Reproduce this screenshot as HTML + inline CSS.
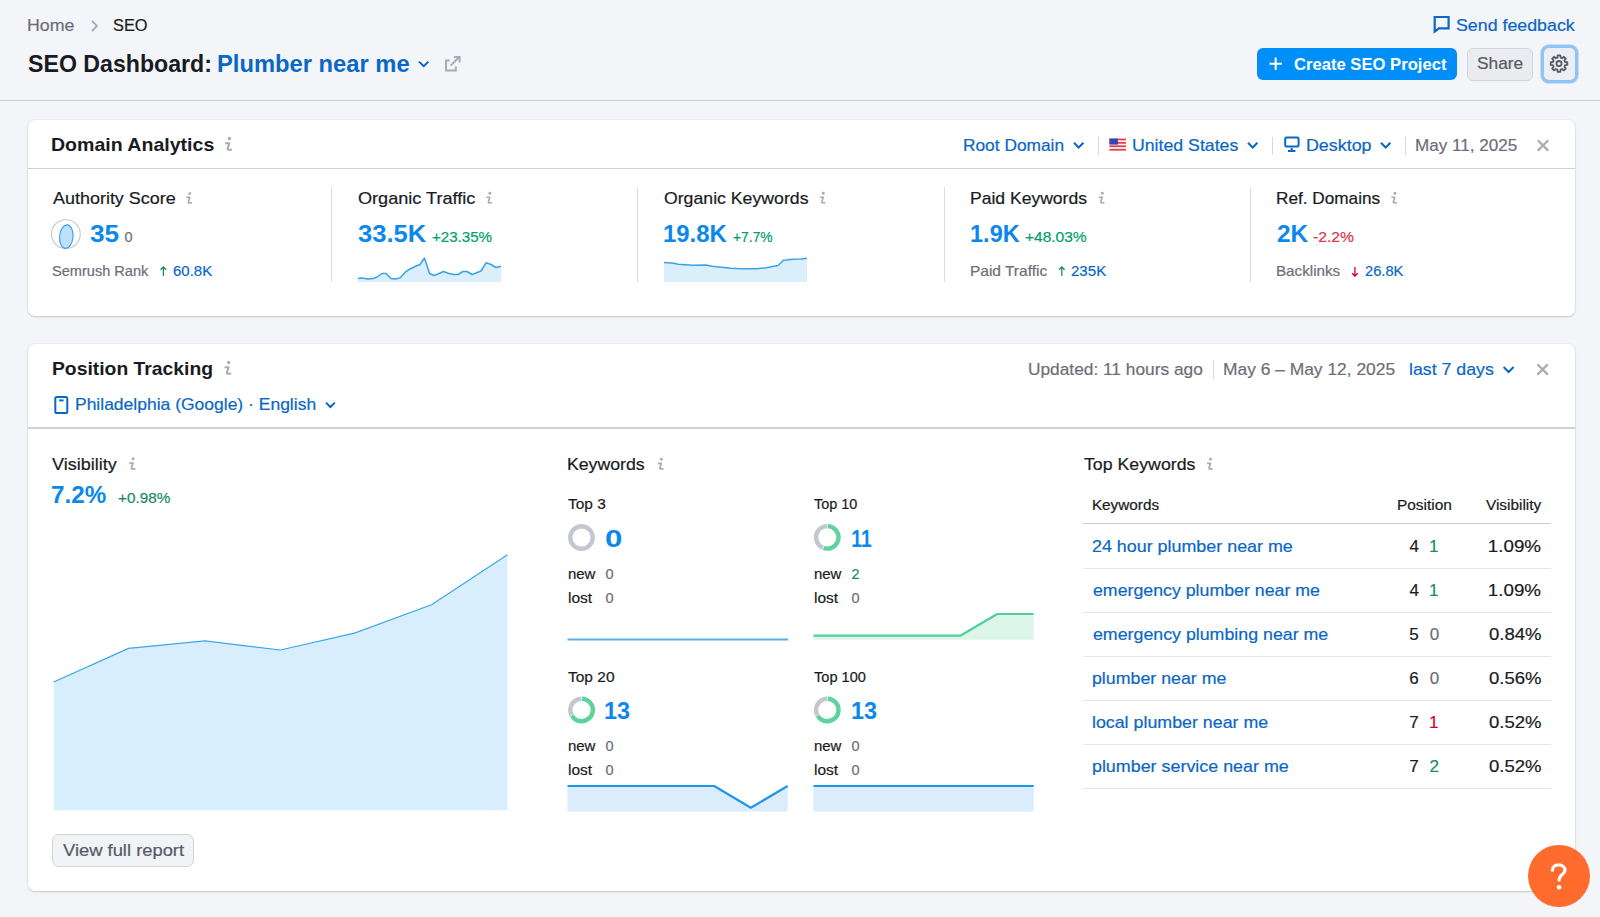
<!DOCTYPE html>
<html><head><meta charset="utf-8">
<style>
html,body{margin:0;padding:0;}
body{width:1600px;height:917px;overflow:hidden;background:#f4f5f9;position:relative;font-family:"Liberation Sans",sans-serif;color:#191b23;}
.t{position:absolute;line-height:1;white-space:nowrap;-webkit-text-stroke:0.2px currentColor;}
.abs{position:absolute;}
.hdr-line{position:absolute;left:0;top:100px;width:1600px;height:1px;background:#c9cbd3;}
.card{position:absolute;left:28px;width:1547px;background:#fff;border-radius:7px;box-shadow:0 1px 2px rgba(25,27,35,0.18),0 0 0 1px rgba(25,27,35,0.035);}
.divh{position:absolute;height:1px;background:#dcdde3;}
.divv{position:absolute;width:1px;background:#dcdde3;}
.btn-blue{position:absolute;left:1257px;top:48px;width:200px;height:32px;background:#008ff8;border-radius:6px;}
.btn-share{position:absolute;left:1467px;top:48px;width:64px;height:31px;background:#ebecf0;border:1px solid #d3d5dc;border-radius:6px;}
.btn-gear{position:absolute;left:1541px;top:45px;width:31px;height:32px;background:#eceef3;border:3px solid #8fc5f4;border-radius:8px;box-shadow:0 0 0 0.8px rgba(143,197,244,0.6);}
.btn-view{position:absolute;left:52px;top:834px;width:140px;height:31px;background:#f2f3f6;border:1px solid #d1d3da;border-radius:7px;}
.help{position:absolute;left:1527.5px;top:845px;width:62px;height:62px;border-radius:50%;background:#ff6b2d;}
svg.ov{position:absolute;left:0;top:0;width:1600px;height:917px;}
</style></head><body>
<div class="hdr-line"></div>
<div class="btn-blue"></div>
<div class="btn-share"></div>
<div class="btn-gear"></div>

<div class="card" style="top:120px;height:196px;"></div>
<div class="divh" style="left:28px;top:168px;width:1547px;background:#cfd1d7;"></div>
<div class="divv" style="left:331px;top:187px;height:95px;"></div>
<div class="divv" style="left:637px;top:187px;height:95px;"></div>
<div class="divv" style="left:944px;top:187px;height:95px;"></div>
<div class="divv" style="left:1250px;top:187px;height:95px;"></div>

<div class="card" style="top:344px;height:547px;"></div>
<div class="divh" style="left:28px;top:427px;width:1547px;height:2px;background:#d0d2d8;"></div>
<div class="divh" style="left:1083px;top:523px;width:468px;background:#c8cad1;"></div>
<div class="divh" style="left:1083px;top:568px;width:468px;background:#e6e7ec;"></div>
<div class="divh" style="left:1083px;top:612px;width:468px;background:#e6e7ec;"></div>
<div class="divh" style="left:1083px;top:656px;width:468px;background:#e6e7ec;"></div>
<div class="divh" style="left:1083px;top:700px;width:468px;background:#e6e7ec;"></div>
<div class="divh" style="left:1083px;top:744px;width:468px;background:#e6e7ec;"></div>
<div class="divh" style="left:1083px;top:788px;width:468px;background:#e6e7ec;"></div>

<div class="btn-view"></div>

<svg class="ov" viewBox="0 0 1600 917">
<path d="M358,278.5 L362,278 L368,279 L373,278.5 L377,277 L382,273.5 L386,273.5 L391,278.5 L395,279 L400,278 L406,271.5 L410,269 L415,266.5 L420,264.5 L424.5,258 L429.5,273.5 L434,275.5 L439,273.5 L443.5,271.5 L449,273.5 L454,274.5 L458,274.5 L463,271.5 L467,271.5 L472,274.5 L476,273 L481,271 L486,262.8 L491,264.5 L496,267.5 L501,266.2 L501,282 L358,282 Z" fill="#dbeefc"/><path d="M358,278.5 L362,278 L368,279 L373,278.5 L377,277 L382,273.5 L386,273.5 L391,278.5 L395,279 L400,278 L406,271.5 L410,269 L415,266.5 L420,264.5 L424.5,258 L429.5,273.5 L434,275.5 L439,273.5 L443.5,271.5 L449,273.5 L454,274.5 L458,274.5 L463,271.5 L467,271.5 L472,274.5 L476,273 L481,271 L486,262.8 L491,264.5 L496,267.5 L501,266.2" fill="none" stroke="#3aa3e8" stroke-width="1.5" stroke-linejoin="round"/>
<path d="M664,262.5 L674,263.3 L678,264.2 L693,265.2 L706,265 L712,266.2 L731,268.2 L741,268.8 L756,268.8 L766,267.8 L778,265.5 L783.5,260.3 L787,260 L792,259.3 L801,259 L807,258.2 L807,282 L664,282 Z" fill="#dbeefc"/><path d="M664,262.5 L674,263.3 L678,264.2 L693,265.2 L706,265 L712,266.2 L731,268.2 L741,268.8 L756,268.8 L766,267.8 L778,265.5 L783.5,260.3 L787,260 L792,259.3 L801,259 L807,258.2" fill="none" stroke="#3aa3e8" stroke-width="1.5" stroke-linejoin="round"/>
<path d="M53.7,682 L128.5,648.4 L204.9,640.8 L280.3,650 L354.5,633.1 L431.5,604.7 L507.5,554.7 L507.5,810.2 L53.7,810.2 Z" fill="#d9eefc"/><path d="M53.7,682 L128.5,648.4 L204.9,640.8 L280.3,650 L354.5,633.1 L431.5,604.7 L507.5,554.7" fill="none" stroke="#3aa8e6" stroke-width="1.2" stroke-linejoin="round"/>
<path d="M567.5,639.6 L788,639.6" stroke="#5aaee6" stroke-width="2" fill="none"/>
<path d="M813.5,635.7 L960.2,635.7 L997.2,614 L1033.7,614 L1033.7,639.7 L813.5,639.7 Z" fill="#dcf6ea"/><path d="M813.5,635.7 L960.2,635.7 L997.2,614 L1033.7,614" fill="none" stroke="#52cf9c" stroke-width="2.2" stroke-linejoin="round"/>
<path d="M567.5,786 L714.2,786 L750.8,807.7 L787.7,786 L787.7,811.4 L567.5,811.4 Z" fill="#dbedfc"/><path d="M567.5,786 L714.2,786 L750.8,807.7 L787.7,786" fill="none" stroke="#1f96ea" stroke-width="2.2" stroke-linejoin="round"/>
<path d="M813.5,786 L1033.7,786 L1033.7,811.4 L813.5,811.4 Z" fill="#dbedfc"/><path d="M813.5,786 L1033.7,786" fill="none" stroke="#1f96ea" stroke-width="2.2" stroke-linejoin="round"/>
<!-- breadcrumb chevron -->
<path d="M92,21 L97,26 L92,31" fill="none" stroke="#a9abb6" stroke-width="1.8"/>
<!-- title chevron -->
<path d="M419,61.6 L423.7,66.2 L428.4,61.6" fill="none" stroke="#0b67c4" stroke-width="2"/>
<!-- external link -->
<g fill="none" stroke="#a9abb6" stroke-width="2">
<path d="M449.7,60.6 H446 V70.4 H455.8 V66.6"/>
<path d="M450.6,65.6 L459,57.2"/>
<path d="M454,57 H459.6 V62.4"/>
</g>
<!-- feedback icon -->
<path d="M1434.7,17 H1448.6 V28.3 H1439 L1434.7,31.6 Z" fill="none" stroke="#0b67c4" stroke-width="2.2" stroke-linejoin="miter"/>
<!-- plus -->
<path d="M1275.7,57.6 V70 M1269.5,63.8 H1281.9" stroke="#fff" stroke-width="2"/>
<!-- gear -->
<g transform="translate(1559,63.6)" fill="none" stroke="#575a66" stroke-width="1.8" stroke-linejoin="round">
<path id="gearp" d="M-1.59,-5.99 L-1.34,-8.29 L1.34,-8.29 L1.59,-5.99 A6.20,6.20 0 0 1 3.11,-5.36 L4.92,-6.81 L6.81,-4.92 L5.36,-3.11 A6.20,6.20 0 0 1 5.99,-1.59 L8.29,-1.34 L8.29,1.34 L5.99,1.59 A6.20,6.20 0 0 1 5.36,3.11 L6.81,4.92 L4.92,6.81 L3.11,5.36 A6.20,6.20 0 0 1 1.59,5.99 L1.34,8.29 L-1.34,8.29 L-1.59,5.99 A6.20,6.20 0 0 1 -3.11,5.36 L-4.92,6.81 L-6.81,4.92 L-5.36,3.11 A6.20,6.20 0 0 1 -5.99,1.59 L-8.29,1.34 L-8.29,-1.34 L-5.99,-1.59 A6.20,6.20 0 0 1 -5.36,-3.11 L-6.81,-4.92 L-4.92,-6.81 L-3.11,-5.36 A6.20,6.20 0 0 1 -1.59,-5.99 Z"/>
<circle r="2.6"/>
</g>
<!-- domain chevrons -->
<g fill="none" stroke="#0b67c4" stroke-width="2">
<path d="M1074,142.8 L1078.7,147.5 L1083.4,142.8"/>
<path d="M1248,142.8 L1252.7,147.5 L1257.4,142.8"/>
<path d="M1381,142.8 L1385.7,147.5 L1390.4,142.8"/>
<path d="M326,402.6 L330.4,407 L334.8,402.6"/>
<path d="M1503.6,367 L1508.6,372 L1513.6,367"/>
</g>
<!-- separators -->
<g stroke="#d6d8de" stroke-width="1">
<path d="M1098.5,137 V155"/><path d="M1272.5,137 V155"/><path d="M1405.5,137 V155"/><path d="M1213.5,361 V379"/>
</g>
<!-- flag -->
<g>
<rect x="1109.4" y="138.6" width="16.6" height="12" fill="#f5f5f5"/>
<rect x="1109.4" y="138.6" width="16.6" height="1.7" fill="#e8384a"/>
<rect x="1109.4" y="142" width="16.6" height="1.7" fill="#e8384a"/>
<rect x="1109.4" y="145.4" width="16.6" height="1.7" fill="#e8384a"/>
<rect x="1109.4" y="148.9" width="16.6" height="1.7" fill="#e8384a"/>
<rect x="1109.4" y="138.6" width="8.5" height="6" fill="#3b44a8"/>
</g>
<!-- desktop -->
<g fill="none" stroke="#0b67c4" stroke-width="2">
<rect x="1285.2" y="137.5" width="13.4" height="9" rx="1.2"/>
<path d="M1288,151 H1295.4 M1291.7,148 V151"/>
</g>
<!-- close X -->
<g stroke="#a9abb6" stroke-width="2.3">
<path d="M1537.8,140.2 L1548.2,150.6 M1548.2,140.2 L1537.8,150.6"/>
<path d="M1537.4,364.2 L1547.8,374.6 M1547.8,364.2 L1537.4,374.6"/>
</g>
<!-- phone -->
<g fill="none" stroke="#0b67c4" stroke-width="2">
<rect x="55.3" y="397" width="12" height="16.1" rx="1.6"/>
<path d="M59.2,400.4 H63.6"/>
</g>
<!-- authority score circle -->
<circle cx="65.9" cy="234.1" r="14.4" fill="#fff" stroke="#c4c7cf" stroke-width="1.1"/>
<ellipse cx="66.3" cy="236.6" rx="6.7" ry="11.8" fill="#bfe0fb" stroke="#3a9de4" stroke-width="1.1" transform="rotate(5 66.3 236.6)"/>
<!-- arrows -->
<g fill="none" stroke-width="1.3">
<path d="M163.4,267 V276 M160.6,269.8 L163.4,267 L166.2,269.8" stroke="#1d8a64"/>
<path d="M1061.8,267 V276 M1059,269.8 L1061.8,267 L1064.6,269.8" stroke="#1d8a64"/>
<path d="M1354.9,267 V276 M1352.1,273.2 L1354.9,276 L1357.7,273.2" stroke="#d1002f"/>
</g>
<circle cx="581.5" cy="537.5" r="11.25" fill="none" stroke="#c4c7cf" stroke-width="4.4"/>
<circle cx="827.3" cy="537.4" r="11.25" fill="none" stroke="#c4c7cf" stroke-width="4.4" stroke-dasharray="30.63 70.69" transform="rotate(112.0 827.3 537.4)"/>
<circle cx="827.3" cy="537.4" r="11.25" fill="none" stroke="#5ed39f" stroke-width="4.4" stroke-dasharray="38.48 70.69" transform="rotate(-88.0 827.3 537.4)"/>
<circle cx="581.6" cy="710" r="11.25" fill="none" stroke="#c4c7cf" stroke-width="4.4" stroke-dasharray="22.78 70.69" transform="rotate(152.0 581.6 710)"/>
<circle cx="581.6" cy="710" r="11.25" fill="none" stroke="#5ed39f" stroke-width="4.4" stroke-dasharray="46.34 70.69" transform="rotate(-88.0 581.6 710)"/>
<circle cx="827.3" cy="710" r="11.25" fill="none" stroke="#c4c7cf" stroke-width="4.4" stroke-dasharray="22.78 70.69" transform="rotate(152.0 827.3 710)"/>
<circle cx="827.3" cy="710" r="11.25" fill="none" stroke="#5ed39f" stroke-width="4.4" stroke-dasharray="46.34 70.69" transform="rotate(-88.0 827.3 710)"/>
<g transform="translate(224.3,137) scale(1.015)" fill="none" stroke="#a9abb6" stroke-width="2" stroke-linejoin="round"><circle cx="5.0" cy="1.5" r="1.65" fill="#a9abb6" stroke="none"/><path d="M0.9,6.1 H4.9 L3.3,11.3 Q3.0,12.5 4.2,12.5 H7.5"/></g>
<g transform="translate(185.6,192.3) scale(0.847)" fill="none" stroke="#a9abb6" stroke-width="2" stroke-linejoin="round"><circle cx="5.0" cy="1.5" r="1.65" fill="#a9abb6" stroke="none"/><path d="M0.9,6.1 H4.9 L3.3,11.3 Q3.0,12.5 4.2,12.5 H7.5"/></g>
<g transform="translate(485.6,192) scale(0.861)" fill="none" stroke="#a9abb6" stroke-width="2" stroke-linejoin="round"><circle cx="5.0" cy="1.5" r="1.65" fill="#a9abb6" stroke="none"/><path d="M0.9,6.1 H4.9 L3.3,11.3 Q3.0,12.5 4.2,12.5 H7.5"/></g>
<g transform="translate(819,192) scale(0.861)" fill="none" stroke="#a9abb6" stroke-width="2" stroke-linejoin="round"><circle cx="5.0" cy="1.5" r="1.65" fill="#a9abb6" stroke="none"/><path d="M0.9,6.1 H4.9 L3.3,11.3 Q3.0,12.5 4.2,12.5 H7.5"/></g>
<g transform="translate(1098,192) scale(0.861)" fill="none" stroke="#a9abb6" stroke-width="2" stroke-linejoin="round"><circle cx="5.0" cy="1.5" r="1.65" fill="#a9abb6" stroke="none"/><path d="M0.9,6.1 H4.9 L3.3,11.3 Q3.0,12.5 4.2,12.5 H7.5"/></g>
<g transform="translate(1390.6,192) scale(0.861)" fill="none" stroke="#a9abb6" stroke-width="2" stroke-linejoin="round"><circle cx="5.0" cy="1.5" r="1.65" fill="#a9abb6" stroke="none"/><path d="M0.9,6.1 H4.9 L3.3,11.3 Q3.0,12.5 4.2,12.5 H7.5"/></g>
<g transform="translate(223.6,361) scale(1.015)" fill="none" stroke="#a9abb6" stroke-width="2" stroke-linejoin="round"><circle cx="5.0" cy="1.5" r="1.65" fill="#a9abb6" stroke="none"/><path d="M0.9,6.1 H4.9 L3.3,11.3 Q3.0,12.5 4.2,12.5 H7.5"/></g>
<g transform="translate(128.5,457.5) scale(0.912)" fill="none" stroke="#a9abb6" stroke-width="2" stroke-linejoin="round"><circle cx="5.0" cy="1.5" r="1.65" fill="#a9abb6" stroke="none"/><path d="M0.9,6.1 H4.9 L3.3,11.3 Q3.0,12.5 4.2,12.5 H7.5"/></g>
<g transform="translate(657,458) scale(0.876)" fill="none" stroke="#a9abb6" stroke-width="2" stroke-linejoin="round"><circle cx="5.0" cy="1.5" r="1.65" fill="#a9abb6" stroke="none"/><path d="M0.9,6.1 H4.9 L3.3,11.3 Q3.0,12.5 4.2,12.5 H7.5"/></g>
<g transform="translate(1206.2,458) scale(0.876)" fill="none" stroke="#a9abb6" stroke-width="2" stroke-linejoin="round"><circle cx="5.0" cy="1.5" r="1.65" fill="#a9abb6" stroke="none"/><path d="M0.9,6.1 H4.9 L3.3,11.3 Q3.0,12.5 4.2,12.5 H7.5"/></g>
<!-- help -->
</svg>
<div class="help"></div>
<svg class="ov" viewBox="0 0 1600 917" style="pointer-events:none">
<path d="M1552.4,870.2 C1552.4,866.6 1555.2,864.9 1558.6,864.9 C1562.2,864.9 1565,867.2 1565,870.4 C1565,874.2 1559.1,875 1559.1,879.4 V880" fill="none" stroke="#fff" stroke-width="3.3" stroke-linecap="round"/>
<circle cx="1559.1" cy="887.2" r="2.3" fill="#fff"/>
</svg>
<span class="t" style="left:27.34px;top:16.61px;font-size:17px;color:#6c6e79;transform:scaleX(1.0445);transform-origin:1.36px 0;">Home</span>
<span class="t" style="left:112.83px;top:16.61px;font-size:17px;transform:scaleX(0.9610);transform-origin:0.77px 0;">SEO</span>
<span class="t" style="left:27.98px;top:51.98px;font-size:24px;font-weight:700;-webkit-text-stroke:0;transform:scaleX(0.9639);transform-origin:0.72px 0;">SEO Dashboard:</span>
<span class="t" style="left:217.34px;top:51.98px;font-size:24px;font-weight:700;-webkit-text-stroke:0;color:#0b67c4;transform:scaleX(0.9888);transform-origin:1.56px 0;">Plumber near me</span>
<span class="t" style="left:1455.93px;top:17.01px;font-size:17px;color:#0b67c4;transform:scaleX(1.0468);transform-origin:0.77px 0;">Send feedback</span>
<span class="t" style="left:1294.34px;top:55.73px;font-size:16.5px;font-weight:700;-webkit-text-stroke:0;color:#fff;transform:scaleX(1.0074);transform-origin:0.66px 0;">Create SEO Project</span>
<span class="t" style="left:1476.63px;top:55.31px;font-size:17px;color:#575a66;transform:scaleX(1.0188);transform-origin:0.77px 0;">Share</span>
<span class="t" style="left:51.47px;top:134.82px;font-size:19px;font-weight:700;-webkit-text-stroke:0;transform:scaleX(1.0290);transform-origin:1.24px 0;">Domain Analytics</span>
<span class="t" style="left:963.04px;top:136.61px;font-size:17px;color:#0b67c4;transform:scaleX(1.0193);transform-origin:1.36px 0;">Root Domain</span>
<span class="t" style="left:1131.72px;top:136.61px;font-size:17px;color:#0b67c4;transform:scaleX(1.0418);transform-origin:1.27px 0;">United States</span>
<span class="t" style="left:1305.64px;top:136.61px;font-size:17px;color:#0b67c4;transform:scaleX(1.0520);transform-origin:1.36px 0;">Desktop</span>
<span class="t" style="left:1415.04px;top:136.61px;font-size:17px;color:#6c6e79;transform:scaleX(1.0050);transform-origin:1.36px 0;">May 11, 2025</span>
<span class="t" style="left:52.52px;top:190.01px;font-size:17px;transform:scaleX(1.0560);transform-origin:0.09px 0;">Authority Score</span>
<span class="t" style="left:357.84px;top:190.01px;font-size:17px;transform:scaleX(1.0655);transform-origin:0.77px 0;">Organic Traffic</span>
<span class="t" style="left:664.24px;top:190.01px;font-size:17px;transform:scaleX(1.0405);transform-origin:0.77px 0;">Organic Keywords</span>
<span class="t" style="left:969.89px;top:190.01px;font-size:17px;transform:scaleX(1.0320);transform-origin:1.36px 0;">Paid Keywords</span>
<span class="t" style="left:1276.14px;top:190.01px;font-size:17px;transform:scaleX(1.0117);transform-origin:1.36px 0;">Ref. Domains</span>
<span class="t" style="left:90.29px;top:221.66px;font-size:24.5px;font-weight:700;-webkit-text-stroke:0;color:#0a88ee;transform:scaleX(1.0705);transform-origin:0.61px 0;">35</span>
<span class="t" style="left:357.99px;top:221.66px;font-size:24.5px;font-weight:700;-webkit-text-stroke:0;color:#0a88ee;transform:scaleX(1.0429);transform-origin:0.61px 0;">33.5K</span>
<span class="t" style="left:663.41px;top:221.66px;font-size:24.5px;font-weight:700;-webkit-text-stroke:0;color:#0a88ee;transform:scaleX(0.9755);transform-origin:1.59px 0;">19.8K</span>
<span class="t" style="left:969.66px;top:221.66px;font-size:24.5px;font-weight:700;-webkit-text-stroke:0;color:#0a88ee;transform:scaleX(0.9577);transform-origin:1.59px 0;">1.9K</span>
<span class="t" style="left:1276.64px;top:221.66px;font-size:24.5px;font-weight:700;-webkit-text-stroke:0;color:#0a88ee;transform:scaleX(0.9955);transform-origin:0.86px 0;">2K</span>
<span class="t" style="left:124.52px;top:230.13px;font-size:14.5px;color:#6c6e79;">0</span>
<span class="t" style="left:432.07px;top:230.33px;font-size:14.5px;color:#009f6b;transform:scaleX(1.0425);transform-origin:0.73px 0;">+23.35%</span>
<span class="t" style="left:733.27px;top:230.33px;font-size:14.5px;color:#009f6b;transform:scaleX(0.9551);transform-origin:0.73px 0;">+7.7%</span>
<span class="t" style="left:1024.88px;top:230.33px;font-size:14.5px;color:#009f6b;transform:scaleX(1.0708);transform-origin:0.73px 0;">+48.03%</span>
<span class="t" style="left:1313.35px;top:230.33px;font-size:14.5px;color:#e0334a;transform:scaleX(1.0814);transform-origin:0.65px 0;">-2.2%</span>
<span class="t" style="left:51.95px;top:264.03px;font-size:14.5px;color:#6c6e79;transform:scaleX(1.0046);transform-origin:0.65px 0;">Semrush Rank</span>
<span class="t" style="left:970.09px;top:264.03px;font-size:14.5px;color:#6c6e79;transform:scaleX(1.0691);transform-origin:1.16px 0;">Paid Traffic</span>
<span class="t" style="left:1276.34px;top:264.03px;font-size:14.5px;color:#6c6e79;transform:scaleX(1.0487);transform-origin:1.16px 0;">Backlinks</span>
<span class="t" style="left:173.08px;top:264.03px;font-size:14.5px;color:#0b67c4;transform:scaleX(1.0331);transform-origin:0.73px 0;">60.8K</span>
<span class="t" style="left:1071.18px;top:264.03px;font-size:14.5px;color:#0b67c4;transform:scaleX(1.0413);transform-origin:0.73px 0;">235K</span>
<span class="t" style="left:1364.88px;top:264.03px;font-size:14.5px;color:#0b67c4;transform:scaleX(1.0115);transform-origin:0.73px 0;">26.8K</span>
<span class="t" style="left:51.77px;top:358.92px;font-size:19px;font-weight:700;-webkit-text-stroke:0;transform:scaleX(1.0174);transform-origin:1.24px 0;">Position Tracking</span>
<span class="t" style="left:75.04px;top:396.21px;font-size:17px;color:#0b67c4;transform:scaleX(1.0290);transform-origin:1.36px 0;">Philadelphia (Google) · English</span>
<span class="t" style="left:1028.32px;top:360.61px;font-size:17px;color:#6c6e79;transform:scaleX(1.0180);transform-origin:1.27px 0;">Updated: 11 hours ago</span>
<span class="t" style="left:1223.04px;top:360.61px;font-size:17px;color:#6c6e79;transform:scaleX(1.0236);transform-origin:1.36px 0;">May 6 – May 12, 2025</span>
<span class="t" style="left:1409.19px;top:360.91px;font-size:17px;color:#0b67c4;transform:scaleX(1.0445);transform-origin:1.10px 0;">last 7 days</span>
<span class="t" style="left:52.41px;top:455.91px;font-size:17px;transform:scaleX(1.0583);transform-origin:0.09px 0;">Visibility</span>
<span class="t" style="left:51.40px;top:482.76px;font-size:24.5px;font-weight:700;-webkit-text-stroke:0;color:#0a88ee;transform:scaleX(0.9881);transform-origin:1.10px 0;">7.2%</span>
<span class="t" style="left:118.28px;top:491.33px;font-size:14.5px;color:#1d8a64;transform:scaleX(1.0546);transform-origin:0.73px 0;">+0.98%</span>
<span class="t" style="left:567.24px;top:455.91px;font-size:17px;transform:scaleX(1.0416);transform-origin:1.36px 0;">Keywords</span>
<span class="t" style="left:568.24px;top:497.33px;font-size:14.5px;transform:scaleX(1.0657);transform-origin:0.36px 0;">Top 3</span>
<span class="t" style="left:605.04px;top:526.68px;font-size:24px;font-weight:700;-webkit-text-stroke:0;color:#0a88ee;transform:scaleX(1.3);transform-origin:0 0;">0</span>
<span class="t" style="left:567.66px;top:566.53px;font-size:14.5px;transform:scaleX(1.0325);transform-origin:0.94px 0;">new</span>
<span class="t" style="left:605.42px;top:566.53px;font-size:14.5px;color:#6c6e79;">0</span>
<span class="t" style="left:567.66px;top:590.53px;font-size:14.5px;transform:scaleX(1.0682);transform-origin:0.94px 0;">lost</span>
<span class="t" style="left:605.42px;top:590.53px;font-size:14.5px;color:#6c6e79;">0</span>
<span class="t" style="left:814.34px;top:497.33px;font-size:14.5px;transform:scaleX(0.9939);transform-origin:0.36px 0;">Top 10</span>
<span class="t" style="left:850.54px;top:526.68px;font-size:24px;font-weight:700;-webkit-text-stroke:0;color:#0a88ee;transform:scaleX(0.8031);transform-origin:1.56px 0;">11</span>
<span class="t" style="left:813.76px;top:566.53px;font-size:14.5px;transform:scaleX(1.0325);transform-origin:0.94px 0;">new</span>
<span class="t" style="left:851.38px;top:566.53px;font-size:14.5px;color:#1d8a64;">2</span>
<span class="t" style="left:813.76px;top:590.53px;font-size:14.5px;transform:scaleX(1.0682);transform-origin:0.94px 0;">lost</span>
<span class="t" style="left:851.52px;top:590.53px;font-size:14.5px;color:#6c6e79;">0</span>
<span class="t" style="left:568.24px;top:669.63px;font-size:14.5px;transform:scaleX(1.0691);transform-origin:0.36px 0;">Top 20</span>
<span class="t" style="left:604.44px;top:698.98px;font-size:24px;font-weight:700;-webkit-text-stroke:0;color:#0a88ee;transform:scaleX(0.9736);transform-origin:1.56px 0;">13</span>
<span class="t" style="left:567.66px;top:738.83px;font-size:14.5px;transform:scaleX(1.0325);transform-origin:0.94px 0;">new</span>
<span class="t" style="left:605.42px;top:738.83px;font-size:14.5px;color:#6c6e79;">0</span>
<span class="t" style="left:567.66px;top:762.83px;font-size:14.5px;transform:scaleX(1.0682);transform-origin:0.94px 0;">lost</span>
<span class="t" style="left:605.42px;top:762.83px;font-size:14.5px;color:#6c6e79;">0</span>
<span class="t" style="left:814.34px;top:669.63px;font-size:14.5px;transform:scaleX(1.0044);transform-origin:0.36px 0;">Top 100</span>
<span class="t" style="left:850.54px;top:698.98px;font-size:24px;font-weight:700;-webkit-text-stroke:0;color:#0a88ee;transform:scaleX(0.9736);transform-origin:1.56px 0;">13</span>
<span class="t" style="left:813.76px;top:738.83px;font-size:14.5px;transform:scaleX(1.0325);transform-origin:0.94px 0;">new</span>
<span class="t" style="left:851.52px;top:738.83px;font-size:14.5px;color:#6c6e79;">0</span>
<span class="t" style="left:813.76px;top:762.83px;font-size:14.5px;transform:scaleX(1.0682);transform-origin:0.94px 0;">lost</span>
<span class="t" style="left:851.52px;top:762.83px;font-size:14.5px;color:#6c6e79;">0</span>
<span class="t" style="left:1083.88px;top:455.71px;font-size:17px;transform:scaleX(1.0441);transform-origin:0.43px 0;">Top Keywords</span>
<span class="t" style="left:1092.18px;top:497.95px;font-size:14px;transform:scaleX(1.0927);transform-origin:1.12px 0;">Keywords</span>
<span class="t" style="left:1397.48px;top:497.95px;font-size:14px;transform:scaleX(1.1039);transform-origin:1.12px 0;">Position</span>
<span class="t" style="left:1485.93px;top:497.95px;font-size:14px;transform:scaleX(1.0958);transform-origin:0.07px 0;">Visibility</span>
<span class="t" style="left:1092.45px;top:537.81px;font-size:17px;color:#0b67c4;transform:scaleX(1.0523);transform-origin:0.85px 0;">24 hour plumber near me</span>
<span class="t" style="left:1409.58px;top:537.81px;font-size:17px;">4</span>
<span class="t" style="left:1429.12px;top:537.81px;font-size:17px;color:#1d8a64;">1</span>
<span class="t" style="left:1487.92px;top:537.81px;font-size:17px;transform:scaleX(1.1031);transform-origin:1.27px 0;">1.09%</span>
<span class="t" style="left:1092.53px;top:581.81px;font-size:17px;color:#0b67c4;transform:scaleX(1.0444);transform-origin:0.77px 0;">emergency plumber near me</span>
<span class="t" style="left:1409.58px;top:581.81px;font-size:17px;">4</span>
<span class="t" style="left:1429.12px;top:581.81px;font-size:17px;color:#1d8a64;">1</span>
<span class="t" style="left:1487.92px;top:581.81px;font-size:17px;transform:scaleX(1.1031);transform-origin:1.27px 0;">1.09%</span>
<span class="t" style="left:1092.53px;top:625.81px;font-size:17px;color:#0b67c4;transform:scaleX(1.0462);transform-origin:0.77px 0;">emergency plumbing near me</span>
<span class="t" style="left:1409.32px;top:625.81px;font-size:17px;">5</span>
<span class="t" style="left:1429.72px;top:625.81px;font-size:17px;color:#6c6e79;">0</span>
<span class="t" style="left:1488.52px;top:625.81px;font-size:17px;transform:scaleX(1.0891);transform-origin:0.68px 0;">0.84%</span>
<span class="t" style="left:1092.19px;top:669.81px;font-size:17px;color:#0b67c4;transform:scaleX(1.0462);transform-origin:1.10px 0;">plumber near me</span>
<span class="t" style="left:1409.15px;top:669.81px;font-size:17px;">6</span>
<span class="t" style="left:1429.72px;top:669.81px;font-size:17px;color:#6c6e79;">0</span>
<span class="t" style="left:1488.52px;top:669.81px;font-size:17px;transform:scaleX(1.0891);transform-origin:0.68px 0;">0.56%</span>
<span class="t" style="left:1092.19px;top:713.81px;font-size:17px;color:#0b67c4;transform:scaleX(1.0478);transform-origin:1.10px 0;">local plumber near me</span>
<span class="t" style="left:1409.15px;top:713.81px;font-size:17px;">7</span>
<span class="t" style="left:1429.12px;top:713.81px;font-size:17px;color:#d1002f;">1</span>
<span class="t" style="left:1488.52px;top:713.81px;font-size:17px;transform:scaleX(1.0891);transform-origin:0.68px 0;">0.52%</span>
<span class="t" style="left:1092.19px;top:757.81px;font-size:17px;color:#0b67c4;transform:scaleX(1.0523);transform-origin:1.10px 0;">plumber service near me</span>
<span class="t" style="left:1409.15px;top:757.81px;font-size:17px;">7</span>
<span class="t" style="left:1429.55px;top:757.81px;font-size:17px;color:#1d8a64;">2</span>
<span class="t" style="left:1488.52px;top:757.81px;font-size:17px;transform:scaleX(1.0891);transform-origin:0.68px 0;">0.52%</span>
<span class="t" style="left:62.71px;top:841.61px;font-size:17px;color:#575a66;transform:scaleX(1.0800);transform-origin:0.09px 0;">View full report</span>
</body></html>
